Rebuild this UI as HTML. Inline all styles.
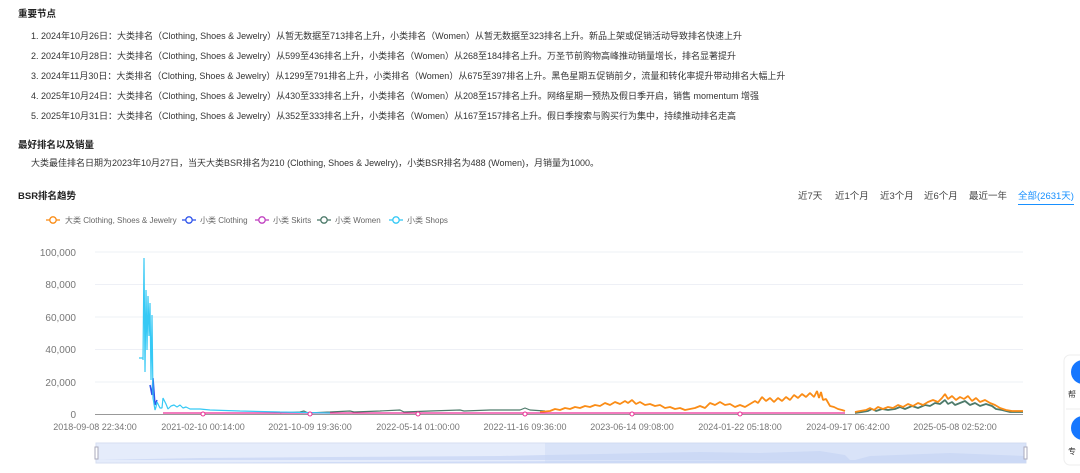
<!DOCTYPE html>
<html><head><meta charset="utf-8"><style>
body{margin:0;width:1080px;height:473px;background:#fff;overflow:hidden;font-family:"Liberation Sans","Noto Sans CJK SC",sans-serif;color:#333;position:relative}
.a{position:absolute;white-space:nowrap}
.h{font-size:9.5px;font-weight:bold;color:#222}
.t{font-size:9px;color:#333}
.btn{font-size:9.5px;color:#444}
</style></head><body>
<div class="a h" style="left:18px;top:6px">重要节点</div>
<div class="a t" style="left:31px;top:29px">1. 2024年10月26日：大类排名（Clothing, Shoes &amp; Jewelry）从暂无数据至713排名上升，小类排名（Women）从暂无数据至323排名上升。新品上架或促销活动导致排名快速上升</div>
<div class="a t" style="left:31px;top:49px">2. 2024年10月28日：大类排名（Clothing, Shoes &amp; Jewelry）从599至436排名上升，小类排名（Women）从268至184排名上升。万圣节前购物高峰推动销量增长，排名显著提升</div>
<div class="a t" style="left:31px;top:69px">3. 2024年11月30日：大类排名（Clothing, Shoes &amp; Jewelry）从1299至791排名上升，小类排名（Women）从675至397排名上升。黑色星期五促销前夕，流量和转化率提升带动排名大幅上升</div>
<div class="a t" style="left:31px;top:89px">4. 2025年10月24日：大类排名（Clothing, Shoes &amp; Jewelry）从430至333排名上升，小类排名（Women）从208至157排名上升。网络星期一预热及假日季开启，销售 momentum 增强</div>
<div class="a t" style="left:31px;top:109px">5. 2025年10月31日：大类排名（Clothing, Shoes &amp; Jewelry）从352至333排名上升，小类排名（Women）从167至157排名上升。假日季搜索与购买行为集中，持续推动排名走高</div>
<div class="a h" style="left:18px;top:137px">最好排名以及销量</div>
<div class="a t" style="left:31px;top:156px">大类最佳排名日期为2023年10月27日，当天大类BSR排名为210 (Clothing, Shoes &amp; Jewelry)，小类BSR排名为488 (Women)，月销量为1000。</div>
<div class="a h" style="left:18px;top:188px">BSR排名趋势</div>
<div class="a btn" style="left:798px;top:188px">近7天</div>
<div class="a btn" style="left:835px;top:188px">近1个月</div>
<div class="a btn" style="left:880px;top:188px">近3个月</div>
<div class="a btn" style="left:924px;top:188px">近6个月</div>
<div class="a btn" style="left:969px;top:188px">最近一年</div>
<div class="a btn" style="left:1018px;top:188px;color:#1890ff;border-bottom:1px solid #1890ff;padding-bottom:2px">全部(2631天)</div>
<svg class="a" style="left:0;top:0" width="1080" height="473">
<g fill="none" stroke-width="1.3">
<path d="M46 220h14" stroke="#fa8c16"/><circle cx="53" cy="220" r="3.2" fill="#fff" stroke="#fa8c16"/>
<path d="M182 220h14" stroke="#2f54eb"/><circle cx="189" cy="220" r="3.2" fill="#fff" stroke="#2f54eb"/>
<path d="M255 220h14" stroke="#c041c0"/><circle cx="262" cy="220" r="3.2" fill="#fff" stroke="#c041c0"/>
<path d="M317 220h14" stroke="#4d7a6a"/><circle cx="324" cy="220" r="3.2" fill="#fff" stroke="#4d7a6a"/>
<path d="M389 220h14" stroke="#36c9f5"/><circle cx="396" cy="220" r="3.2" fill="#fff" stroke="#36c9f5"/>
</g>
<g font-size="8" fill="#666" font-family="Liberation Sans,Noto Sans CJK SC,sans-serif">
<text x="65" y="223">大类 Clothing, Shoes &amp; Jewelry</text>
<text x="200" y="223">小类 Clothing</text>
<text x="273" y="223">小类 Skirts</text>
<text x="335" y="223">小类 Women</text>
<text x="407" y="223">小类 Shops</text>
</g>
<g stroke="#eef0f6" stroke-width="1">
<path d="M95 252H1023M95 284.5H1023M95 317H1023M95 349.5H1023M95 382H1023"/>
</g>
<path d="M95 414.5H1023" stroke="#999" stroke-width="1"/>
<g font-size="10" fill="#777" text-anchor="end" font-family="Liberation Sans,sans-serif">
<text x="76" y="256">100,000</text><text x="76" y="288">80,000</text><text x="76" y="321">60,000</text><text x="76" y="353">40,000</text><text x="76" y="386">20,000</text><text x="76" y="418">0</text>
</g>
<g font-size="9" fill="#777" text-anchor="middle" font-family="Liberation Sans,sans-serif">
<text x="95" y="430">2018-09-08 22:34:00</text><text x="203" y="430">2021-02-10 00:14:00</text><text x="310" y="430">2021-10-09 19:36:00</text><text x="418" y="430">2022-05-14 01:00:00</text><text x="525" y="430">2022-11-16 09:36:00</text><text x="632" y="430">2023-06-14 09:08:00</text><text x="740" y="430">2024-01-22 05:18:00</text><text x="848" y="430">2024-09-17 06:42:00</text><text x="955" y="430">2025-05-08 02:52:00</text>
</g>
<g fill="none" stroke-width="1.2" stroke-linejoin="bevel">
<path d="M280 413 L300 412 L304 411 L308 413 L330 412 L350 411 L354 412 L380 411 L400 410 L404 412 L430 411 L460 410 L464 411 L490 410 L520 410 L525 408 L530 410 L545 411" stroke="#4d7a6a"/>
<path d="M855 413 L862 412 L868 411 L872 409 L876 411 L882 409 L888 410 L895 409 L900 407 L905 409 L912 406 L918 408 L925 405 L930 406 L935 403 L940 404 L945 400 L948 404 L952 402 L955 405 L960 403 L965 401 L970 405 L975 403 L980 406 L986 404 L992 406 L996 409 L1002 410 L1010 412 L1023 412" stroke="#4d7a6a" stroke-width="1.8"/>
<path d="M540 412 L550 411 L555 409 L560 410 L565 408 L570 409 L575 407 L580 408 L585 406 L590 407 L595 405 L600 406 L605 403 L610 405 L615 402 L620 404 L625 401 L628 403 L632 400 L636 404 L640 402 L645 405 L650 404 L655 406 L660 405 L665 408 L670 407 L675 409 L680 408 L685 410 L690 409 L695 408 L700 406 L705 408 L710 403 L715 405 L720 402 L725 405 L730 404 L735 407 L740 405 L745 407 L750 404 L755 401 L758 403 L762 397 L766 401 L770 398 L774 402 L778 398 L782 401 L786 397 L790 400 L794 395 L798 398 L802 394 L806 397 L810 393 L814 397 L817 391 L819 398 L821 392 L823 400 L826 399 L830 406 L834 407 L838 409 L842 410 L845 411" stroke="#fa8c16" stroke-width="1.8"/>
<path d="M855 412 L860 411 L866 410 L870 408 L874 410 L878 407 L883 409 L888 407 L893 408 L898 405 L903 407 L908 404 L913 406 L918 403 L923 405 L928 402 L933 400 L938 402 L942 398 L945 394 L948 399 L952 396 L956 400 L960 397 L964 399 L968 396 L972 401 L976 398 L980 402 L985 400 L990 403 L995 405 L1000 408 L1006 410 L1012 411 L1023 411" stroke="#fa8c16" stroke-width="1.8"/>
<path d="M163 413 L845 413" stroke="#eb2f96"/>
<path d="M150 385 L152 395 L153 378 L155 405 L157 400" stroke="#2f54eb" stroke-width="1.5"/>
<path d="M139 358h4 M143 360 L144 258 L145 372 L146 290 L147 350 L148 296 L149 336 L150 303 L151 380 L152 315 L153 398 L155 410 L156 407 L157 402 L160 408 L162 408 L163 398 L166 404 L168 409 L171 406 L174 405 L177 407 L180 405 L183 408 L186 407 L190 409 L200 409 L210 410 L240 411 L280 412 L330 413" stroke="#36c9f5"/>
</g>
<g fill="#fff" stroke-width="1">
<circle cx="203" cy="414" r="2" stroke="#eb2f96"/><circle cx="310" cy="414" r="2" stroke="#eb2f96"/><circle cx="418" cy="414" r="2" stroke="#eb2f96"/><circle cx="525" cy="414" r="2" stroke="#eb2f96"/><circle cx="632" cy="414" r="2" stroke="#eb2f96"/><circle cx="740" cy="414" r="2" stroke="#eb2f96"/>
</g>
<rect x="96" y="443" width="930" height="20" fill="#e5ecfb" stroke="#d6def0"/>
<path d="M96 460 L200 458 L330 457 L500 456 L545 455 L600 454 L700 452 L760 453 L820 451 L845 455 L850 460 M855 460 L870 456 L950 453 L1026 456 L1026 463 L96 463Z" fill="#cfdbf6"/>
<rect x="545" y="443" width="481" height="20" fill="#c8d6f4" opacity="0.4"/>
<rect x="95" y="447" width="3" height="12" fill="#fff" stroke="#aab"/>
<rect x="1024" y="447" width="3" height="12" fill="#fff" stroke="#aab"/>
<rect x="1064" y="355" width="22" height="110" rx="6" fill="#fff" stroke="#eee"/>
<circle cx="1083" cy="372" r="12" fill="#1677ff"/>
<circle cx="1083" cy="428" r="12" fill="#1677ff"/>
<path d="M1066 409H1080" stroke="#eee"/>
<text x="1068" y="397" font-size="8" fill="#333">帮</text>
<text x="1068" y="454" font-size="8" fill="#333">专</text>
</svg>
</body></html>
